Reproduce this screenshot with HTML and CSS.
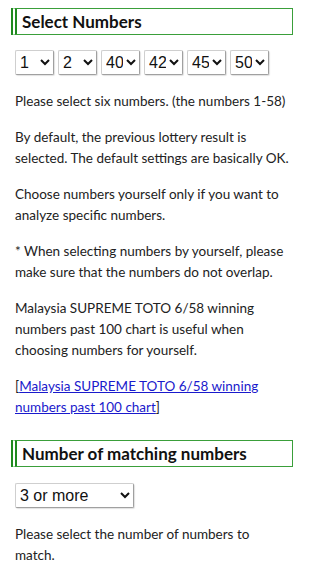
FILE: index.html
```html
<!DOCTYPE html>
<html lang="en">
<head>
<meta charset="utf-8">
<link rel="stylesheet" href="styles.css">
</head>
<body>
<div class="page">
  <h2 class="sec-title">Select Numbers</h2>
  <div class="num-row">
    <select class="num"><option>1</option><option>58</option></select>
    <select class="num"><option>2</option><option>58</option></select>
    <select class="num"><option selected>40</option><option>58</option></select>
    <select class="num"><option selected>42</option><option>58</option></select>
    <select class="num"><option selected>45</option><option>58</option></select>
    <select class="num"><option selected>50</option><option>58</option></select>
  </div>
  <p>Please select six numbers. (the numbers 1-58)</p>
  <p>By default, the previous lottery result is selected. The default settings are basically OK.</p>
  <p>Choose numbers yourself only if you want to analyze specific numbers.</p>
  <p>* When selecting numbers by yourself, please make sure that the numbers do not overlap.</p>
  <p>Malaysia SUPREME TOTO 6/58 winning numbers past 100 chart is useful when choosing numbers for yourself.</p>
  <p>[<a href="#">Malaysia SUPREME TOTO 6/58 winning numbers past 100 chart</a>]</p>
  <h2 class="sec-title second">Number of matching numbers</h2>
  <div class="match-row">
    <select class="match"><option>3 or more</option><option>4 or more</option><option>5 or more</option><option>6 (all numbers)</option></select>
  </div>
  <p>Please select the number of numbers to match.</p>
</div>
</body>
</html>
```

FILE: styles.css
```css
html, body {
  margin: 0;
  padding: 0;
  background: #ffffff;
}
.page {
  width: 282px;
  padding: 8px 7px 0 11px;
  font-family: "Lato", "Liberation Sans", sans-serif;
  font-size: 13.5px;
  line-height: 21px;
  color: #222222;
}
.sec-title {
  margin: 0;
  font-size: 17px;
  font-weight: 700;
  line-height: 25px;
  color: #111111;
  border: 1px solid #3a9f3a;
  border-left: 6px double #1f8a1f;
  padding: 0 0 0 5px;
}
.sec-title.second {
  margin-top: 22px;
}
.num-row {
  display: flex;
  gap: 4px;
  margin: 15px 4px 16px;
}
.match-row {
  display: flex;
  margin: 16px 4px;
}
select {
  font-family: "Liberation Sans", Arial, sans-serif;
  font-size: 16px;
  height: 25px;
  color: #111111;
  background-color: #ffffff;
  border: 1px solid #cfcfcf;
  border-right-color: #a0a0a0;
  border-bottom-color: #a0a0a0;
  border-radius: 2px;
  box-shadow: 1px 1px 1px rgba(0, 0, 0, 0.12);
}
.num {
  width: 39px;
}
.match {
  width: 119px;
}
p {
  margin: 15px 0;
  padding: 0 4px;
}
a {
  color: #1a1acc;
}
```
